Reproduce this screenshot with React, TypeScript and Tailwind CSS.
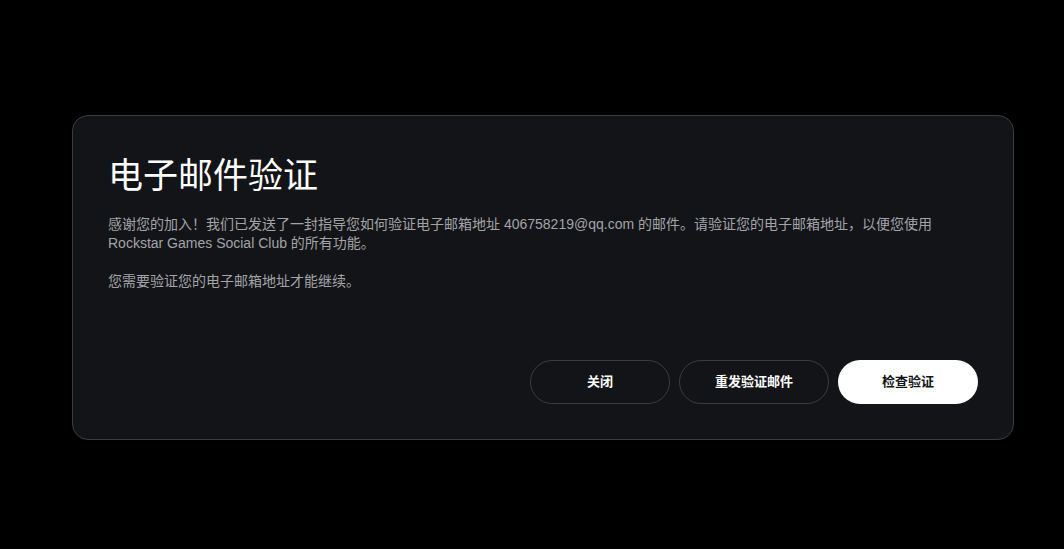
export default function App() {
  return (
    <div
      className="w-[1064px] h-[549px] bg-black pt-[115px] pl-[72px]"
      style={{ fontFamily: '"Liberation Sans", "Noto Sans CJK SC", sans-serif' }}
    >
      <div className="w-[942px] h-[325px] rounded-[16px] border border-[#3b3c40] bg-[#131417] px-[35px] pt-[38px] pb-[35px] flex flex-col">
        <h1 className="text-[35px] leading-[44px] text-white font-normal">电子邮件验证</h1>
        <p className="mt-[17px] text-[14px] leading-[19px] text-[#a3a4a8]">
          感谢您的加入！我们已发送了一封指导您如何验证电子邮箱地址 406758219@qq.com 的邮件。请验证您的电子邮箱地址，以便您使用
          <br />
          Rockstar Games Social Club 的所有功能。
        </p>
        <p className="mt-[19px] text-[14px] leading-[19px] text-[#a3a4a8]">您需要验证您的电子邮箱地址才能继续。</p>
        <div className="mt-auto flex justify-end gap-[9px]">
          <button className="w-[140px] h-[44px] rounded-full border border-[#3b3c40] text-white text-[13px] font-bold">
            关闭
          </button>
          <button className="w-[150px] h-[44px] rounded-full border border-[#3b3c40] text-white text-[13px] font-bold">
            重发验证邮件
          </button>
          <button className="w-[140px] h-[44px] rounded-full bg-white text-[#131417] text-[13px] font-bold">
            检查验证
          </button>
        </div>
      </div>
    </div>
  );
}
